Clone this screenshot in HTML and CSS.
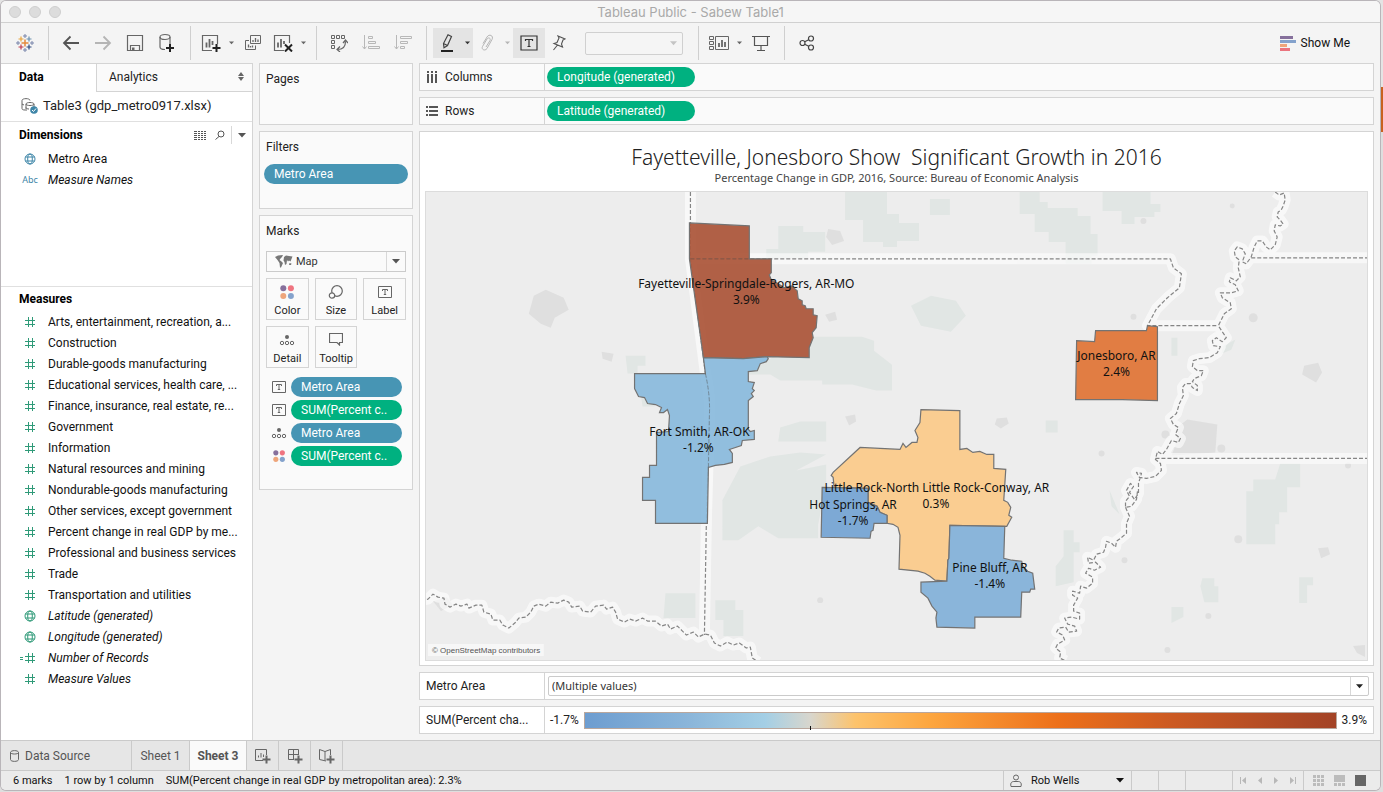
FILE: index.html
```html
<!DOCTYPE html>
<html lang="en">
<head>
<meta charset="utf-8">
<title>Tableau Public - Sabew Table1</title>
<link rel="stylesheet" href="styles.css">
</head>
<body>
<svg class="sprite" aria-hidden="true">
  <symbol id="hash" viewBox="0 0 12 12"><path d="M4.500 1v10M8.500 1v10M1 4.500h10M1 8.500h10" fill="none" stroke="currentColor"/></symbol>
  <symbol id="globe" viewBox="0 0 12 12"><g fill="none" stroke="currentColor"><circle cx="6" cy="6" r="5"/><ellipse cx="6" cy="6" rx="2.3" ry="5"/><path d="M1.5 4h9M1.5 8h9"/></g></symbol>
  <symbol id="caret" viewBox="0 0 8 5"><path d="M0 0h8L4 4.5z" fill="currentColor"/></symbol>
  <symbol id="text" viewBox="0 0 14 12"><path d="M.5.5h13v11H.5z" fill="none" stroke="currentColor"/><path d="M4.5 5V3.5h5V5M7 3.5v5M5.8 8.5h2.4" fill="none" stroke="currentColor"/></symbol>
  <symbol id="detail" viewBox="0 0 16 12"><circle cx="8" cy="3" r="2" fill="currentColor"/><g fill="none" stroke="currentColor"><circle cx="3" cy="9" r="1.7"/><circle cx="8" cy="9" r="1.7"/><circle cx="13" cy="9" r="1.7"/></g></symbol>
  <symbol id="colors" viewBox="0 0 14 14"><circle cx="3.3" cy="3.3" r="3" fill="#86709c"/><circle cx="10.9" cy="3.3" r="3" fill="#ef7480"/><circle cx="3.3" cy="10.9" r="3" fill="#eea57b"/><circle cx="10.9" cy="10.9" r="3" fill="#84a2cc"/></symbol>
</svg>
<div class="window">
  <header class="titlebar">
    <div class="lights"><i></i><i></i><i></i></div>
    <h1>Tableau Public - Sabew Table1</h1>
  </header>

  <nav class="toolbar" aria-label="Toolbar">
    <button class="tool" aria-label="Start page"><svg width="18" height="18" viewBox="0 0 18 18" fill="none"><path d="M9 5.5v7M5.5 9h7" stroke="#e58a3c" stroke-width="1.5"/><path d="M5 2.5v5M2.5 5h5" stroke="#e8a33d" stroke-width="1.2"/><path d="M13 2.5v5M10.5 5h5" stroke="#6a8fae" stroke-width="1.2"/><path d="M5 10.5v5M2.5 13h5" stroke="#bf3a4c" stroke-width="1.2"/><path d="M13 10.5v5M10.5 13h5" stroke="#2c477c" stroke-width="1.2"/><path d="M9 0v4M7 2h4M2 7v4M0 9h4M16 7v4M14 9h4M9 14v4M7 16h4" stroke="#7885ab"/></svg></button>
    <span class="sep"></span>
    <button class="tool" aria-label="Undo"><svg width="18" height="16" viewBox="0 0 18 16"><path d="M17 8H2M8.5 1.5L2 8l6.500 6.500" fill="none" stroke="#555" stroke-width="1.800"/></svg></button>
    <button class="tool" aria-label="Redo"><svg width="18" height="16" viewBox="0 0 18 16"><path d="M1 8h15M9.500 1.500L16 8l-6.500 6.500" fill="none" stroke="#b5b5b5" stroke-width="1.800"/></svg></button>
    <button class="tool" aria-label="Save"><svg width="18" height="18" viewBox="0 0 18 18" fill="none" stroke="#666" stroke-width="1.200"><path d="M1.500 1.500h15v15h-15zM4.500 16.500v-5h9v5"/><path d="M6 13.500h2.500v3H6z" fill="#666" stroke="none"/></svg></button>
    <button class="tool" aria-label="New data source"><svg width="18" height="20" viewBox="0 0 18 20" fill="none" stroke="#666" stroke-width="1.200"><ellipse cx="7" cy="4" rx="5" ry="2.500"/><path d="M2 4v10c0 1.500 2 2.500 5 2.500M12 4v7"/><path d="M12 11v8M8 15h8" stroke="#222" stroke-width="2"/></svg></button>
    <span class="sep"></span>
    <button class="tool narrow" aria-label="New worksheet"><svg width="20" height="18" viewBox="0 0 20 18" fill="none" stroke="#666" stroke-width="1.200"><path d="M11 16.500H1.500v-15h15V10"/><path d="M5.500 13.500V8.500M8.500 13.500V5M11.500 11V7" stroke-width="1.800"/><path d="M15.500 10v8M11.500 14h8" stroke="#222" stroke-width="2"/></svg></button>
    <button class="drop" aria-label="New worksheet options"><svg width="5" height="4"><use href="#caret"/></svg></button>
    <button class="tool" aria-label="Duplicate"><svg width="18" height="18" viewBox="0 0 18 18" fill="none" stroke="#666"><path d="M6.500 1.500h10v8h-10zM5 6.500H1.500v9h10V11.500"/><path d="M9 8V6M11.500 8V4M14 8V5.500M4.500 13.500v-3M6.500 13.500v-1.500M8.500 13.500v-2" stroke-width="1.300"/></svg></button>
    <button class="tool narrow" aria-label="Clear sheet"><svg width="20" height="18" viewBox="0 0 20 18" fill="none" stroke="#666" stroke-width="1.200"><path d="M11 16.500H1.500v-15h15V9"/><path d="M5 13.500V8.500M8 13.500V5M11 10V7" stroke-width="1.800"/><path d="M12 10.500l7 7M19 10.500l-7 7" stroke="#222" stroke-width="2"/></svg></button>
    <button class="drop" aria-label="Clear options"><svg width="5" height="4"><use href="#caret"/></svg></button>
    <span class="sep"></span>
    <button class="tool" aria-label="Swap"><svg width="18" height="18" viewBox="0 0 18 18" fill="none" stroke="#666"><path d="M1.500 1.500h3v3h-3zM6.500 1.500h3v3h-3zM11.500 1.500h3v3h-3zM1.500 6.500h3v3h-3zM1.500 11.500h3v3h-3z"/><path d="M7.500 15.500c5 0 8-3 8-8M10 12.500l-3 3 3 2.500M13 9l2.500-3L18 9" stroke-width="1.200"/></svg></button>
    <button class="tool" aria-label="Sort ascending"><svg width="18" height="16" viewBox="0 0 18 16" fill="none" stroke="#b8b8b8"><path d="M2.500 0v14M.5 11.500l2 2.500 2-2.500M6.500 1.500h4v2h-4zM6.500 6.500h7v2h-7zM6.500 11.500h11v2h-11z"/></svg></button>
    <button class="tool" aria-label="Sort descending"><svg width="18" height="16" viewBox="0 0 18 16" fill="none" stroke="#b8b8b8"><path d="M2.500 0v14M.5 11.500l2 2.500 2-2.500M6.500 1.500h11v2h-11zM6.500 6.500h7v2h-7zM6.500 11.500h4v2h-4z"/></svg></button>
    <span class="sep"></span>
    <button class="tool narrow on" aria-label="Highlight"><svg width="14" height="18" viewBox="0 0 14 18" fill="none" stroke="#444" stroke-width="1.200"><path d="M8 .8l3.500 1.700-4 9L4 13.800l-.5-4.300zM3.500 9.500l4 2"/><path d="M1 17h12" stroke="#222" stroke-width="2"/></svg></button>
    <button class="drop on" aria-label="Highlight options"><svg width="5" height="4"><use href="#caret"/></svg></button>
    <button class="tool narrow faint" aria-label="Group"><svg width="14" height="18" viewBox="0 0 14 18" fill="none" stroke="#b5b5b5"><path d="M3 9.500L7 3c2-3.500 7-1.500 5 2.500l-5 9c-2 3-6 1-4.500-2L7 5c1.500-2 4-1 3 1.500L6 13"/></svg></button>
    <button class="drop faint" aria-label="Group options"><svg width="5" height="4"><use href="#caret"/></svg></button>
    <button class="tool on" aria-label="Show mark labels"><svg width="18" height="16" viewBox="0 0 18 16" fill="none" stroke="#333" stroke-width="1.200"><path d="M1 1h16v14H1zM5.500 6V4.500h7V6M9 4.500v7M7.500 11.500h3"/></svg></button>
    <button class="tool narrow" aria-label="Fix axes"><svg width="14" height="16" viewBox="0 0 14 16" fill="none" stroke="#555" stroke-width="1.100"><path d="M6 1l7 3-2 1-1.500 4 1 3L2 8.500l3-1L7 3zM5.500 10L1.500 15"/></svg></button>
    <span class="combo fit"><select aria-label="Fit" disabled><option></option></select><svg width="7" height="5"><use href="#caret"/></svg></span>
    <span class="sep"></span>
    <button class="tool narrow" aria-label="Show cards"><svg width="20" height="16" viewBox="0 0 20 16" fill="none" stroke="#666"><path d="M.5 1.500h4v3h-4zM.5 6.500h4v3h-4zM.5 11.500h4v3h-4zM6.500 1.500h13v13h-13z"/><path d="M10 12V8M13 12V5M16 12V7" stroke-width="1.800"/></svg></button>
    <button class="drop" aria-label="Card options"><svg width="5" height="4"><use href="#caret"/></svg></button>
    <button class="tool" aria-label="Presentation mode"><svg width="18" height="16" viewBox="0 0 18 16" fill="none" stroke="#555" stroke-width="1.200"><path d="M0 1.500h18M2.500 2v8.500h13V2M9 10.500V15M5 15.500h8"/></svg></button>
    <span class="sep"></span>
    <button class="tool" aria-label="Share"><svg width="16" height="16" viewBox="0 0 16 16" fill="none" stroke="#444" stroke-width="1.200"><circle cx="3.500" cy="8" r="2.500"/><circle cx="12" cy="3.500" r="2.500"/><circle cx="12" cy="12.500" r="2.500"/><path d="M5.700 6.800l4-2.100M5.700 9.200l4 2.100"/></svg></button>
    <button class="showme"><svg width="16" height="15" viewBox="0 0 16 15"><path d="M0 0h13v3H0z" fill="#86709c"/><path d="M0 4h16v3H0z" fill="#84a2cc"/><path d="M0 8h7v3H0z" fill="#eea57b"/><path d="M0 12h10v3H0z" fill="#ea747e"/></svg>Show Me</button>
  </nav>

  <main class="work">
    <aside class="data">
      <div class="tabs"><button class="tab active">Data</button><button class="tab">Analytics<svg width="6" height="9" viewBox="0 0 6 9"><path d="M0 4l3-4 3 4zM0 5l3 4 3-4z" fill="#666"/></svg></button></div>
      <div class="source"><svg width="17" height="16" viewBox="0 0 17 16" fill="none" stroke="#666"><path d="M4 12c-2 0-3-.5-3-1.500V2.500C1 0 9 0 9 2.500M5 13V6c0-2 8-2 8 0v3M5 6c0 2 8 2 8 0M1 6l2 1M5 9.500c0 1 1.500 1.500 3 1.500"/><circle cx="13" cy="12" r="3.800" fill="#3f86a8" stroke="none"/><path d="M11 12l1.500 1.500 2.500-3" stroke="#fff"/></svg>Table3 (gdp_metro0917.xlsx)</div>
      <section class="dims">
        <div class="head"><h2>Dimensions</h2>
          <button class="mini" aria-label="View data"><svg width="12" height="9" viewBox="0 0 12 9"><path d="M0 .5h3M4 .5h2M7 .5h2M10 .5h2M0 2.500h3M4 2.500h2M7 2.500h2M10 2.500h2M0 4.500h3M4 4.500h2M7 4.500h2M10 4.500h2M0 6.500h3M4 6.500h2M7 6.500h2M10 6.500h2M0 8.500h3M4 8.500h2M7 8.500h2M10 8.500h2" stroke="#555" fill="none"/></svg></button>
          <button class="mini" aria-label="Find field"><svg width="10" height="10" viewBox="0 0 10 10" fill="none" stroke="#555"><circle cx="6" cy="4" r="3"/><path d="M4 6.500L.5 9.500"/></svg></button>
          <button class="mini menu" aria-label="Data pane options"><svg width="8" height="5"><use href="#caret"/></svg></button>
        </div>
        <ul class="fields blue">
          <li><svg width="12" height="12"><use href="#globe"/></svg>Metro Area</li>
          <li class="calc"><b>Abc</b>Measure Names</li>
        </ul>
      </section>
      <section class="meas">
        <div class="head"><h2>Measures</h2></div>
        <ul class="fields green">
          <li><svg width="12" height="12"><use href="#hash"/></svg>Arts, entertainment, recreation, a...</li>
          <li><svg width="12" height="12"><use href="#hash"/></svg>Construction</li>
          <li><svg width="12" height="12"><use href="#hash"/></svg>Durable-goods manufacturing</li>
          <li><svg width="12" height="12"><use href="#hash"/></svg>Educational services, health care, ...</li>
          <li><svg width="12" height="12"><use href="#hash"/></svg>Finance, insurance, real estate, re...</li>
          <li><svg width="12" height="12"><use href="#hash"/></svg>Government</li>
          <li><svg width="12" height="12"><use href="#hash"/></svg>Information</li>
          <li><svg width="12" height="12"><use href="#hash"/></svg>Natural resources and mining</li>
          <li><svg width="12" height="12"><use href="#hash"/></svg>Nondurable-goods manufacturing</li>
          <li><svg width="12" height="12"><use href="#hash"/></svg>Other services, except government</li>
          <li><svg width="12" height="12"><use href="#hash"/></svg>Percent change in real GDP by me...</li>
          <li><svg width="12" height="12"><use href="#hash"/></svg>Professional and business services</li>
          <li><svg width="12" height="12"><use href="#hash"/></svg>Trade</li>
          <li><svg width="12" height="12"><use href="#hash"/></svg>Transportation and utilities</li>
          <li class="calc"><svg width="12" height="12"><use href="#globe"/></svg>Latitude (generated)</li>
          <li class="calc"><svg width="12" height="12"><use href="#globe"/></svg>Longitude (generated)</li>
          <li class="calc"><svg width="20" height="12" viewBox="0 0 20 12"><path d="M0 5.500h3M0 7.500h3M8.500 1v10M12.500 1v10M5 4.500h10M5 8.500h10" fill="none" stroke="currentColor"/></svg>Number of Records</li>
          <li class="calc"><svg width="12" height="12"><use href="#hash"/></svg>Measure Values</li>
        </ul>
      </section>
    </aside>

    <div class="cards">
      <section class="card pages"><h2>Pages</h2></section>
      <section class="card filters"><h2>Filters</h2><button class="pill dim">Metro Area</button></section>
      <section class="card marks"><h2>Marks</h2>
        <span class="combo mark"><svg class="lead" width="18" height="13" viewBox="0 0 18 13" fill="#777"><path d="M0 2l3-1.500L8 0 7 2 5.500 3.500 4.500 5l2 1.500L8 8l-2 4.500H5L4.500 8 2.500 5zM9 2l2-1.500 3 .5 3.500.5L16.500 4l-1 2.500-1.500-1-1 1-1-1.500-.5 4-1.500 1L9.500 7 8.500 5.500zM14.500 8l2 .5L16 10h-2z"/></svg><select aria-label="Mark type"><option>Map</option></select><svg width="8" height="5"><use href="#caret"/></svg></span>
        <div class="grid">
          <button><svg width="14" height="14"><use href="#colors"/></svg>Color</button>
          <button><svg width="16" height="14" viewBox="0 0 16 14" fill="none" stroke="#666" stroke-width="1.200"><circle cx="9" cy="6" r="5.300"/><circle cx="4" cy="10.500" r="2.700" fill="#fafafa"/></svg>Size</button>
          <button><svg width="14" height="12"><use href="#text"/></svg>Label</button>
          <button><svg width="16" height="12"><use href="#detail"/></svg>Detail</button>
          <button><svg width="14" height="13" viewBox="0 0 14 13"><path d="M.5.5h13v9h-3V12L8 9.500H.5z" fill="none" stroke="#666" stroke-width="1.200"/></svg>Tooltip</button>
        </div>
        <div class="enc">
          <svg width="14" height="12"><use href="#text"/></svg><button class="pill dim">Metro Area</button>
          <svg width="14" height="12"><use href="#text"/></svg><button class="pill mea">SUM(Percent c..</button>
          <svg width="16" height="12"><use href="#detail"/></svg><button class="pill dim">Metro Area</button>
          <svg width="12" height="12"><use href="#colors"/></svg><button class="pill mea">SUM(Percent c..</button>
        </div>
      </section>
    </div>

    <div class="sheet">
      <div class="shelf"><span class="name"><svg width="12" height="12" viewBox="0 0 12 12"><path d="M2 0v2M6 0v2M10 0v2M2 3v9M6 3v9M10 3v9" stroke="#555" stroke-width="2"/></svg>Columns</span><button class="pill mea">Longitude (generated)</button></div>
      <div class="shelf"><span class="name"><svg width="12" height="12" viewBox="0 0 12 12"><path d="M0 2h2M0 6h2M0 10h2M3 2h9M3 6h9M3 10h9" stroke="#555" stroke-width="2"/></svg>Rows</span><button class="pill mea">Latitude (generated)</button></div>
      <section class="viz">
        <h2>Fayetteville, Jonesboro Show&nbsp; Significant Growth in 2016</h2>
        <p>Percentage Change in GDP, 2016, Source: Bureau of Economic Analysis</p>
        <svg class="map" viewBox="425 191 943 469" preserveAspectRatio="xMidYMid slice" role="img" aria-label="Map of Arkansas metro areas">
          <path fill="#ededed" d="M0 0h1800v900H0z"/>
          <g fill="#e1e6e4">
            <path d="M778 225h25v6h22v20h-17v7h-42v-10h12zM845 191h42v22h12v9h20v18h-22v6h-14v-5h-20v-22h-18zM930 198h20v16h-20zM1020 191h20v10h8v6h30v8h13v18h7v22h-6v8h-26v-22h-17v-10h-14v-18h-15zM1103 191h48v12h10v8h-6v5h-20v7h-13v-13h-19z"/>
            <path d="M770 358l30-22h62l12 4v10l18 14v26h-16l-24-6h-30v-4h-42l-10-6h-30v-10zM780 427l20-6h26v20h-48zM722 500l18-34 30-10 30-4 26 2-30 16 30-6v22l-8 38v14h-40l-20-12-20 14h-16z"/>
            <path d="M1281 463h20v24h-13v25h-8v12h-4v20h-29v-53h7v-12h22zM1064 530h10v12h6v10h-6v30l-18 4v-20l8-10zM1203 578h12v8h4v16h-14l-4-16zM1300 577h14v8h-6v18h-8zM1172 607h12v10l-12 6zM1110 490l10 24-8-8zM911 305l20-10 25 5 10 15-15 16-30-6zM665 593h30v25h-32zM715 600h20v10h8v26h-20v-16h-8zM625 355h20v10h-8v8h-10zM640 392h14v14h-12zM1046 420h12v12h-12zM1172 337h6v18h-6zM1224 345l12-6-4 10-10 4z"/>
          </g>
          <g fill="#dfdfdf">
            <path d="M1180 425l8-6 30 5-2 28-44 3 4-10zM1305 365l14-3 4 10-6 10-14-8zM533 295l12-6 18 8 5 12-14 8-4 10-10-4-12-10zM828 228l12 2 4 10-12 4-6-8zM997 418l10-1 2 6-8 5-6-4zM845 416l10-2 1 7-7 4zM1319 548l10-1 2 7-9 4zM1354 646l12-1v12l-8-4zM432 601l14-4 6 8-12 6zM601 351l12 2-2 8-9-3zM825 314l10-3 2 8-8 2z"/>
            <circle cx="1144" cy="220" r="3"/><circle cx="1233" cy="205" r="2.500"/><circle cx="1134" cy="316" r="3"/><circle cx="1254" cy="317" r="4.500"/><circle cx="1222" cy="448" r="4"/><circle cx="1166" cy="434" r="4"/><circle cx="1102" cy="453" r="3"/><circle cx="1239" cy="539" r="4"/><circle cx="1125" cy="560" r="3"/><circle cx="1209" cy="616" r="3"/><circle cx="1168" cy="650" r="3"/><circle cx="1349" cy="465" r="3"/>
            <circle cx="820" cy="600" r="3"/>
          </g>
          <defs>
            <g id="borders" fill="none" stroke-linejoin="round">
              <path d="M690 185V258L705 373Q710 395 709 415L706 520 704 635M690 258H1171L1174 267 1182 273 1180 287 1168 297 1157 308 1148 325H1219M1252 257H1700M1156 458H1700"/>
              <path d="M1276 191L1280 194 1285 192 1286 199 1284 205 1282 209 1279 211 1278 216 1281 219 1284 223 1281 225 1276 224 1275 230 1278 236 1276 244 1271 249 1267 246 1263 240 1258 240 1255 246 1252 256 1247 263 1243 261 1246 253 1243 248 1238 246 1235 250 1236 256 1240 259 1239 267 1241 276 1237 280 1231 277 1230 281 1236 284 1239 290 1232 292 1221 292 1223 297 1231 302 1232 308 1225 313 1222 319 1219 325 1223 331 1227 337 1223 341 1217 337 1213 340 1214 345 1221 346 1218 352 1210 357 1200 358 1194 360 1193 366 1198 370 1204 370 1202 375 1195 378 1193 381 1198 385 1198 390 1193 387 1191 383 1186 383 1183 387 1184 395 1180 403 1177 413 1171 418 1174 424 1179 427 1176 434 1181 438 1179 442 1172 440 1167 449 1163 454 1158 451 1156 459 1161 463 1162 470 1156 476 1147 478 1140 477 1137 472 1142 473 1139 483 1139 493 1135 499 1130 492 1134 486 1131 483 1127 490 1130 496 1126 501 1126 507 1132 506 1137 499 1138 491M1126 507L1130 516 1127 523 1127 533 1121 538 1117 541 1116 547 1112 543 1107 541 1106 547 1104 552 1097 554 1094 560 1088 557 1089 563 1096 562 1101 567 1095 570 1089 568 1086 573 1093 577 1093 583 1087 588 1081 586 1080 593 1073 591 1073 595 1078 598 1074 605 1074 611 1080 613 1080 619 1072 617 1065 618 1068 624 1075 626 1077 631 1069 632 1066 627 1059 628 1057 632 1063 635 1065 640 1058 644 1056 648 1061 652 1060 658 1066 661"/>
              <path d="M420 600L427 599 432 594 437 597 443 598 444 604 449 607 455 604 460 606 466 604 468 608 475 605 481 605 483 612 490 614 492 620 499 620 502 625 508 628 514 623 518 618 525 617 530 612 533 606 538 604 545 606 550 602 557 603 563 600 568 602 571 607 579 606 582 611 590 612 595 606 603 605 606 609 612 607 615 612 617 619 624 622 629 619 635 621 642 618 647 621 655 621 661 626 667 624 670 629 677 626 682 631 686 635 693 632 698 637 704 634 710 635 714 643 720 646 727 642 733 645 739 643 746 648 750 647 752 658 758 662"/>
            </g>
          </defs>
          <use href="#borders" stroke="#fff" stroke-width="11" opacity=".6"/>
          <use href="#borders" stroke="#858585" stroke-width="1.200" stroke-dasharray="4 2"/>
          <g fill-opacity=".94" stroke="#737373" stroke-width="1.200">
            <path fill="#ac573c" d="M689 222L749 225V258H771V272L769 274 771 279 778 283 784 287 791 285 797 290 798 298 802 300V304L805 305 806 308H813V314L817 315 816 327 812 332 813 337 809 347V357L767 356 743 358 703 357 689 258z"/>
            <path fill="#8bbbdd" d="M703 357L743 358 767 356 768 358 766 361 760 363 757 370 748 371V381L754 382 752 388 754 390 751 393 753 396 748 400V429L750 431 754 430V439L742 440 741 445 729 449 732 453V462L724 464 715 465 708 467 707 523H655V500H642V477H649V465H656V432L668 431 669 415 667 409 663 412 659 412 661 407 655 404 647 403 644 397 638 396 634 388V373H705z"/>
            <path fill="#fbcb8b" d="M921 409L960 410V449L967 448 973 452 980 451 987 454H994V468L1006 469 1004 500 1008 502 1011 507 1009 515 1012 517 1007 526 950 525 949 558 948 560 947 581 935 580 930 576 925 573 918 571 899 569 900 535 898 527 893 524 887 523V515L880 512 877 506 868 502V488L834 487 833 477 831 475 833 472 860 447 900 449 903 443 906 447 912 442H917L918 437 915 430 920 422z"/>
            <path fill="#76a5d3" d="M822 487L868 488V502L877 506 880 512 887 515V523H874L873 530 871 531 870 538 821 537z"/>
            <path fill="#84b1d9" d="M950 525L1005 526 1004 558 1012 560 1022 561 1023 566 1028 571 1033 573 1035 589 1031 589 1030 592H1022L1021 617H975V628L937 627 936 618 937 612 932 606 928 598 921 592V582L947 581 948 560 949 558z"/>
            <path fill="#e07638" d="M1077 340L1095 341 1096 330H1147L1148 325 1158 326V400L1123 399 1076 399z"/>
          </g>
          <path d="M690 258H749M705 373Q710 395 709 415L708 467" fill="none" stroke="#555" stroke-opacity=".5" stroke-dasharray="4 2"/>
          <g class="labels">
            <text x="746" y="287">Fayetteville-Springdale-Rogers, AR-MO</text><text x="746" y="303">3.9%</text>
            <text x="699" y="436">Fort Smith, AR-OK</text><text x="698" y="452">-1.2%</text>
            <text x="937" y="492">Little Rock-North Little Rock-Conway, AR</text><text x="936" y="508">0.3%</text>
            <text x="853" y="509">Hot Springs, AR</text><text x="853" y="525">-1.7%</text>
            <text x="990" y="572">Pine Bluff, AR</text><text x="990" y="588">-1.4%</text>
            <text x="1117" y="359">Jonesboro, AR</text><text x="1117" y="375">2.4%</text>
          </g>
          <path fill="#f7f7f7" d="M427 644h116v12H427z"/>
          <text class="credit" x="431" y="653">© OpenStreetMap contributors</text>
        </svg>
      </section>
      <div class="shelf filter"><label class="name" for="area">Metro Area</label><span class="combo area"><select id="area"><option>(Multiple values)</option></select><svg width="7" height="5"><use href="#caret"/></svg></span></div>
      <div class="shelf legend"><span class="name">SUM(Percent cha...</span><span>-1.7%</span><div class="ramp"></div><span>3.9%</span></div>
    </div>
  </main>

  <nav class="sheets" aria-label="Sheets">
    <button class="ds"><svg width="9" height="12" viewBox="0 0 9 12" fill="none" stroke="#666"><path d="M.5 2.500v7c0 2.500 8 2.500 8 0v-7c0-2.500-8-2.500-8 0c0 2 8 2 8 0"/></svg>Data Source</button>
    <button class="s1">Sheet 1</button>
    <button class="s3">Sheet 3</button>
    <button class="add" aria-label="New worksheet"><svg width="16" height="16" viewBox="0 0 16 16" fill="none" stroke="#666"><path d="M8 12.500H.5V1.500h11V7M3.500 9.500V7.500M6 9.500V5M8.500 9V6.500"/><path d="M11.500 7.500v8M7.500 11.500h8" stroke-width="2"/></svg></button>
    <button class="add" aria-label="New dashboard"><svg width="16" height="16" viewBox="0 0 16 16" fill="none" stroke="#666"><path d="M7 11.500H1.500V1.500h10V7M6.500 1.500v10M1.500 6.500h10"/><path d="M11.500 7.500v8M7.500 11.500h8" stroke-width="2"/></svg></button>
    <button class="add" aria-label="New story"><svg width="16" height="16" viewBox="0 0 16 16" fill="none" stroke="#666"><path d="M7 13L.5 11.500V1.500L6 3.500v9M6 3.500l5.500-2V7"/><path d="M11.500 7.500v8M7.500 11.500h8" stroke-width="2"/></svg></button>
  </nav>

  <footer class="status">
    <span>6 marks</span><span>1 row by 1 column</span><span>SUM(Percent change in real GDP by metropolitan area): 2.3%</span>
    <button class="user"><svg width="12" height="14" viewBox="0 0 12 14" fill="none" stroke="#666"><circle cx="6" cy="3.500" r="2.500"/><path d="M1 12.500c-1-4 1-5 3-5h4c2 0 4 1 3 5z"/></svg>Rob Wells<svg width="8" height="5"><use href="#caret"/></svg></button>
    <i class="cell c1"></i><i class="cell c1"></i><i class="cell c2"></i>
    <div class="cell pager">
      <button aria-label="First"><svg width="6" height="7" viewBox="0 0 6 7"><path d="M0 0h1v7H0zM6 0v7L2 3.500z"/></svg></button>
      <button aria-label="Previous"><svg width="6" height="7" viewBox="0 0 6 7"><path d="M5 0v7L1 3.500z"/></svg></button>
      <button aria-label="Next"><svg width="6" height="7" viewBox="0 0 6 7"><path d="M1 0v7l4-3.500z"/></svg></button>
      <button aria-label="Last"><svg width="6" height="7" viewBox="0 0 6 7"><path d="M5 0h1v7H5zM0 0v7l4-3.500z"/></svg></button>
    </div>
    <div class="cell views">
      <button aria-label="Sheet sorter"><svg width="11" height="11" viewBox="0 0 11 11"><path d="M0 0h3v3H0zM4 0h3v3H4zM8 0h3v3H8zM0 4h3v3H0zM4 4h3v3H4zM8 4h3v3H8zM0 8h3v3H0zM4 8h3v3H4zM8 8h3v3H8z"/></svg></button>
      <button aria-label="Filmstrip"><svg width="11" height="11" viewBox="0 0 11 11"><path d="M0 0h11v7H0zM0 8h3v3H0zM4 8h3v3H4zM8 8h3v3H8z"/></svg></button>
      <button aria-label="Tabs"><svg width="11" height="11" viewBox="0 0 11 11"><path fill="#666" d="M0 0h11v11H0z"/></svg></button>
    </div>
  </footer>
</div>
</body>
</html>
```
FILE: styles.css
```css
* { box-sizing: border-box; }
body {
  margin: 0;
  min-height: 100vh;
  display: flex;
  padding: 1px 3px 2px 1px;
  background: linear-gradient(#e4e4e4 87px, #c8611f 87px, #c8611f 132px, #dedede 132px);
  font: 12px/16px Roboto, "Liberation Sans", sans-serif;
  color: #222;
}
h1, h2, p, ul { margin: 0; padding: 0; font-weight: 400; }
ul { list-style: none; }
svg { flex: none; display: block; }
button, select { font: inherit; color: inherit; border: 0; background: none; padding: 0; margin: 0; }
select { appearance: none; opacity: 1; }
.sprite { position: absolute; width: 0; height: 0; }
.window {
  flex: 1;
  min-width: 0;
  display: flex;
  flex-direction: column;
  background: #f4f4f4;
  border-radius: 5px;
  overflow: hidden;
  box-shadow: 0 0 0 1px #b9b5b9;
}
.titlebar { height: 22px; display: grid; align-items: center; border-bottom: 1px solid #d0d0d0; background: #f6f6f6; }
.titlebar > * { grid-area: 1 / 1; }
.titlebar h1 { font: 13px/20px Inter, sans-serif; color: #a9a9a9; text-align: center; }
.lights { display: flex; gap: 8px; padding-left: 8px; }
.lights i { width: 12px; height: 12px; border-radius: 50%; background: #dcdcdc; border: 1px solid #cecece; }

.toolbar { height: 40px; display: flex; align-items: center; padding: 0 30px 0 8px; color: #666; }
.tool, .drop { height: 30px; display: flex; align-items: center; justify-content: center; }
.tool { width: 32px; }
.narrow { width: 28px; }
.drop { width: 12px; }
.on { background: #e4e4e4; color: #333; }
.faint { color: #b5b5b5; }
.sep { width: 1px; height: 34px; margin: 0 6px 0 7px; background: #cfcfcf; }
.showme { margin-left: auto; display: flex; align-items: center; gap: 5px; color: #111; }
.combo { position: relative; display: flex; align-items: center; background: #fff; border: 1px solid #cbcbcb; color: #555; }
.combo select { flex: 1; height: 100%; outline: 0; color: #333; }
.combo > svg:last-child { position: absolute; right: 5px; }
.fit { width: 98px; height: 23px; margin: 0 8px 0 12px; border-color: #d0d0d0; border-radius: 2px; background: #f5f5f5; color: #c4c4c4; }

.work { flex: 1; display: flex; min-height: 0; }
.data { width: 252px; background: #fff; border-right: 1px solid #d4d4d4; }
.tabs { display: flex; height: 29px; }
.tab { display: flex; align-items: center; border: 1px solid #d4d4d4; border-width: 1px 0 1px 1px; flex: 1; padding: 0 8px 2px 12px; background: #fafafa; justify-content: space-between; font-size: 12px; }
.tab.active { flex: 0 0 95px; background: #fff; border-width: 1px 0 0; padding-left: 18px; font-weight: 700; color: #000; }
.source { height: 30px; display: flex; align-items: center; gap: 5px; padding: 0 0 2px 20px; border-bottom: 1px solid #e0e0e0; font-size: 13px; }
.dims { height: 165px; border-bottom: 1px solid #e0e0e0; }
.head { display: flex; align-items: center; height: 26px; padding-left: 18px; }
.meas .head { height: 24px; }
.head h2 { font-size: 12px; font-weight: 700; color: #000; flex: 1; }
.mini { width: 20px; display: flex; justify-content: center; color: #555; }
.mini.menu { height: 18px; width: 21px; align-items: center; border-left: 1px solid #d8d8d8; margin-left: 1px; }
.fields li { display: grid; grid-template-columns: 36px 1fr; align-items: center; height: 21px; padding-left: 11px; color: #111; white-space: nowrap; font-size: 12px; }
.fields svg, .fields b { justify-self: center; }
.fields b { font: 9px/12px "Noto Sans", sans-serif; }
.fields .calc { font-style: italic; }
.blue svg, .blue b { color: #3f86a8; }
.green svg { color: #2f9a78; }

.cards { width: 154px; margin: 0 6px; display: flex; flex-direction: column; gap: 6px; }
.card { background: #fafafa; border: 1px solid #d4d4d4; padding: 6px 5px; }
.card h2 { font-size: 12px; line-height: 18px; padding-left: 1px; }
.pages { height: 62px; }
.filters { height: 78px; padding: 6px 4px; }
.filters h2 { padding-left: 2px; }
.filters .pill { width: 100%; margin-top: 8px; }
.marks { height: 275px; padding: 6px; }
.marks h2 { padding-left: 0; }
.pill { display: block; height: 20px; border-radius: 10px; color: #fff; text-align: left; padding: 0 10px; white-space: nowrap; font-size: 12px; line-height: 20px; }
.dim { background: #4795b4; }
.mea { background: #00b180; }
.mark { margin-top: 11px; height: 21px; padding-left: 8px; font-size: 11px; gap: 3px; background: #fafafa; }
.mark::after { content: ""; position: absolute; right: 18px; top: 0; bottom: 0; border-left: 1px solid #d8d8d8; }
.grid { display: grid; grid-template-columns: repeat(3, 1fr); gap: 6px; margin-top: 6px; }
.grid button { height: 42px; border: 1px solid #d4d4d4; display: grid; justify-items: center; align-items: center; grid-template-rows: 25px 14px; font-size: 11px; line-height: 14px; color: #222; }
.grid svg, .enc svg { color: #666; }
.enc { display: grid; grid-template-columns: 25px 1fr; row-gap: 3px; align-items: center; margin-top: 9px; padding-right: 4px; }
.enc svg { justify-self: center; }

.sheet { flex: 1; min-width: 0; display: flex; flex-direction: column; gap: 6px; margin: 0 6px 6px 0; }
.shelf { height: 28px; flex: none; display: flex; align-items: center; background: #fafafa; border: 1px solid #d4d4d4; font-size: 12px; }
.name { width: 125px; align-self: stretch; display: flex; align-items: center; gap: 7px; padding-left: 6px; border-right: 1px solid #d4d4d4; }
.shelf .pill { width: 148px; margin-left: 2px; }
.viz { flex: 1; min-height: 0; display: flex; flex-direction: column; background: #fff; border: 1px solid #d4d4d4; padding: 12px 5px 4px; text-align: center; font-family: "Noto Sans", sans-serif; }
.viz h2 { font-size: 21px; line-height: 26px; font-weight: 300; color: #222; }
.viz p { font-size: 11px; line-height: 16px; padding-bottom: 5px; color: #444; }
.map { flex: 1; min-height: 0; width: 100%; border: 1px solid #dcdcdc; }
.labels { font: 12px "Noto Sans", sans-serif; fill: #111; text-anchor: middle; }
.credit { font: 8px "Liberation Sans", sans-serif; fill: #555; }
.filter { background: #fff; }
.area { flex: 1; height: 20px; margin: 0 4px 0 3px; border-radius: 2px; font: 11px/16px "Noto Sans", sans-serif; }
.area select { padding-left: 3px; }
.area svg { color: #222; }
.area::after { content: ""; position: absolute; right: 17px; top: 0; bottom: 0; border-left: 1px solid #d8d8d8; }
.legend { background: #fff; gap: 5px; padding-right: 6px; }
.ramp { flex: 1; height: 17px; border: 1px solid #b9a79d; position: relative; background: linear-gradient(90deg, #6d9dd0, #8bb6da 14%, #a4cfe5 24%, #d8d6cd 30%, #fdc36c 36%, #fda63f 46%, #ed701a 63%, #cc5a22 78%, #a34326); }
.ramp::after { content: ""; position: absolute; left: 30%; top: 13px; width: 1px; height: 4px; background: #111; }

.sheets { height: 31px; display: flex; background: #e6e6e6; border-top: 1px solid #cacaca; border-bottom: 1px solid #cacaca; color: #555; font-size: 12px; }
.sheets button { border-right: 1px solid #cacaca; display: flex; align-items: center; justify-content: center; }
.sheets .ds { width: 131px; justify-content: flex-start; padding-left: 9px; gap: 6px; }
.sheets .s1 { width: 58px; }
.sheets .s3 { width: 57px; background: #fafafa; font-weight: 700; }
.sheets .add { width: 32px; }
.status { height: 19px; display: flex; align-items: center; padding-left: 12px; gap: 12px; background: #ebebeb; font-size: 11px; white-space: nowrap; color: #111; }
.user { width: 128px; align-self: stretch; margin-left: auto; border-left: 1px solid #cacaca; display: flex; align-items: center; gap: 9px; padding: 0 7px 0 6px; }
.user svg:last-child { margin-left: auto; }
.cell { align-self: stretch; border-left: 1px solid #cacaca; display: flex; align-items: center; margin-left: -12px; }
.c1 { width: 27px; }
.c2 { width: 47px; }
.pager { width: 71px; padding: 0 7px; justify-content: space-between; fill: #b8b8b8; }
.views { width: 77px; padding: 0 14px 0 9px; justify-content: space-between; fill: #bcbcbc; }
```
